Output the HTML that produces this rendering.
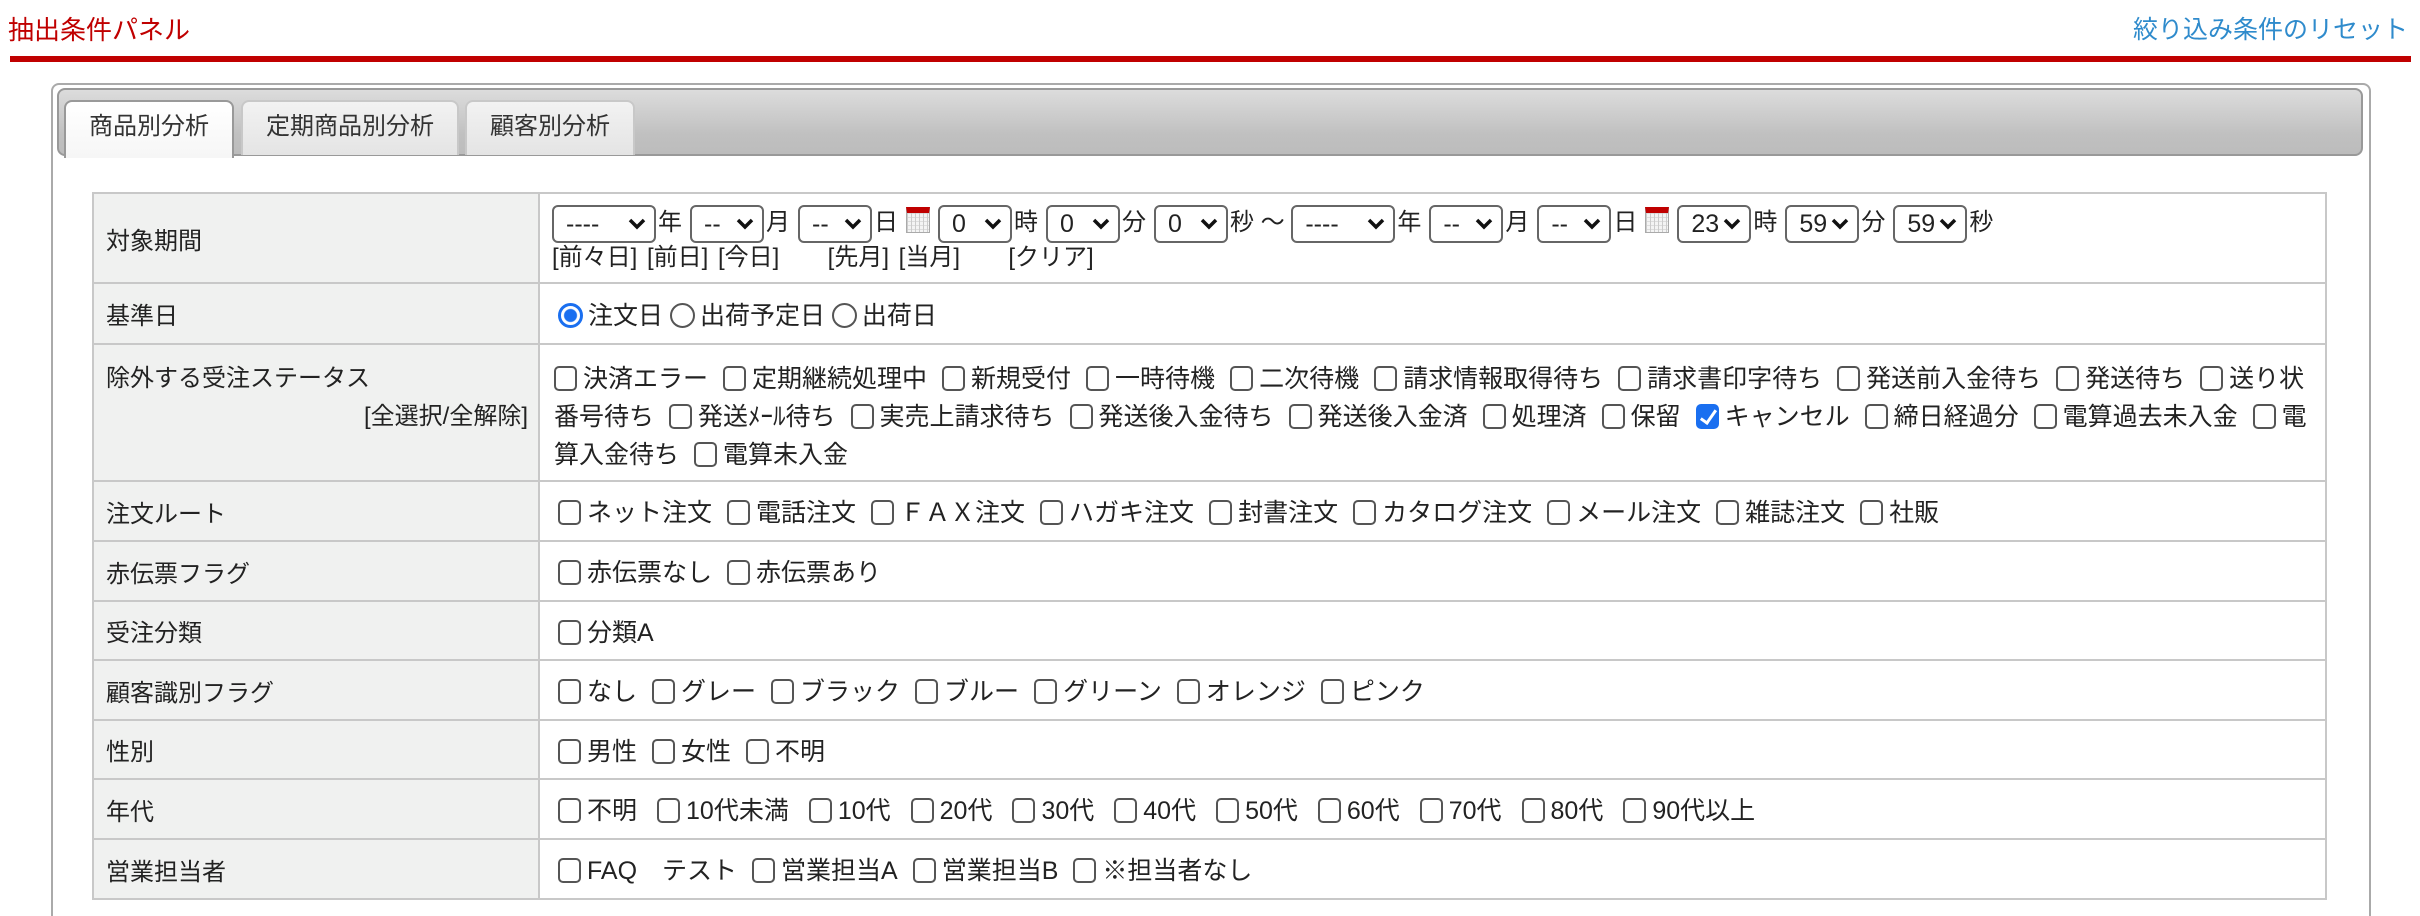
<!DOCTYPE html>
<html><head><meta charset="utf-8">
<style>
*{box-sizing:border-box;margin:0;padding:0}
html,body{width:2420px;height:916px;overflow:hidden}
body{background:#fff;position:relative;font-family:"Liberation Sans","Noto Sans CJK JP",sans-serif;font-size:24px;color:#222}
.title{position:absolute;left:8px;top:13px;font-size:26px;color:#c00000;line-height:34px}
.reset{position:absolute;right:12px;top:13px;font-size:25px;color:#2f8bcc;line-height:34px}
.bar{position:absolute;left:10px;top:56px;width:2401px;height:6px;background:#c00000}
.panel{position:absolute;left:51px;top:83px;width:2320px;height:860px;border:2px solid #aaa;border-radius:8px}
.tabbar{position:absolute;left:57px;top:88px;width:2306px;height:68px;border:2px solid #999;border-radius:8px;background:linear-gradient(#dcdcdc,#c0c0c0 70%,#bcbcbc)}
.tab{position:absolute;top:100px;height:55px;border:2px solid #c8c8c8;border-bottom:none;border-radius:8px 8px 0 0;background:linear-gradient(#f2f2f2,#e4e4e4);color:#333;font-size:24px;line-height:50px;text-align:center}
.tab.act{background:linear-gradient(#fff,#f6f6f6);border-color:#999;height:58px;z-index:2}
table{position:absolute;left:92px;top:192px;width:2235px;border-collapse:collapse}
td{border:2px solid #c8c8c8;vertical-align:middle;white-space:nowrap}
td.l{width:446px;background:#f0f1f0;padding-left:12px;color:#222}
td.c{padding-left:18px;background:#fff;font-size:25px}
.cb{display:inline-block;width:23px;height:25px;border:2px solid #555;border-radius:5px;vertical-align:-4px;margin-right:6px;background:#fff}
.cb.on{background:#1a6ff0;border-color:#1a6ff0;position:relative}
.cb.on:after{content:"";position:absolute;left:6px;top:1px;width:6px;height:14px;border:solid #fff;border-width:0 3px 3px 0;transform:rotate(35deg)}
.it{margin-right:15px}
.wide .it{margin-right:20px}
.rd{display:inline-block;width:25px;height:25px;border:2px solid #555;border-radius:50%;vertical-align:-4px;margin-right:5px;background:#fff}
.rd.on{border:3px solid #1a6ff0;background:radial-gradient(#1a6ff0 0 6px,#fff 7px)}
.sel{display:inline-block;height:38px;border:2px solid #666;border-radius:6px;vertical-align:middle;position:relative;line-height:34px;padding-left:12px;font-size:25px;background:#fff;margin-right:2px}
.sel svg{position:absolute;right:8px;top:11px}
.cal{display:inline-block;width:24px;height:26px;vertical-align:middle;margin:0 8px 0 8px;background:repeating-linear-gradient(90deg,#ccc 0 1px,transparent 1px 4px),repeating-linear-gradient(#ddd 0 1px,#f4f4f4 1px 4px);border:1px solid #aaa;border-top:6px solid #c00000;position:relative;top:-4px}
.g{display:inline-block;width:8px}
.l1{line-height:38px;height:38px}
.l2{line-height:32px;word-spacing:3px}
.ml{line-height:38px}
</style></head><body>
<div class="title">抽出条件パネル</div>
<div class="reset">絞り込み条件のリセット</div>
<div class="bar"></div>
<div class="panel"></div>
<div class="tabbar"></div>
<div class="tab act" style="left:64px;width:170px">商品別分析</div>
<div class="tab" style="left:241px;width:218px">定期商品別分析</div>
<div class="tab" style="left:465px;width:170px">顧客別分析</div>
<table>
<tr style="height:90px"><td class="l">対象期間</td><td class="c" style="padding-left:12px;vertical-align:top;padding-top:10px;font-size:24px">
<div class="l1"><span class="sel" style="width:104px">----<svg width="18" height="12" viewBox="0 0 18 12"><path d="M2 2l7 7 7-7" stroke="#111" stroke-width="3.5" fill="none"/></svg></span>年<span class="g"></span><span class="sel" style="width:74px">--<svg width="18" height="12" viewBox="0 0 18 12"><path d="M2 2l7 7 7-7" stroke="#111" stroke-width="3.5" fill="none"/></svg></span>月<span class="g"></span><span class="sel" style="width:74px">--<svg width="18" height="12" viewBox="0 0 18 12"><path d="M2 2l7 7 7-7" stroke="#111" stroke-width="3.5" fill="none"/></svg></span>日<span class="cal"></span><span class="sel" style="width:74px">0<svg width="18" height="12" viewBox="0 0 18 12"><path d="M2 2l7 7 7-7" stroke="#111" stroke-width="3.5" fill="none"/></svg></span>時<span class="g"></span><span class="sel" style="width:74px">0<svg width="18" height="12" viewBox="0 0 18 12"><path d="M2 2l7 7 7-7" stroke="#111" stroke-width="3.5" fill="none"/></svg></span>分<span class="g"></span><span class="sel" style="width:74px">0<svg width="18" height="12" viewBox="0 0 18 12"><path d="M2 2l7 7 7-7" stroke="#111" stroke-width="3.5" fill="none"/></svg></span>秒 ～ <span class="sel" style="width:104px">----<svg width="18" height="12" viewBox="0 0 18 12"><path d="M2 2l7 7 7-7" stroke="#111" stroke-width="3.5" fill="none"/></svg></span>年<span class="g"></span><span class="sel" style="width:74px">--<svg width="18" height="12" viewBox="0 0 18 12"><path d="M2 2l7 7 7-7" stroke="#111" stroke-width="3.5" fill="none"/></svg></span>月<span class="g"></span><span class="sel" style="width:74px">--<svg width="18" height="12" viewBox="0 0 18 12"><path d="M2 2l7 7 7-7" stroke="#111" stroke-width="3.5" fill="none"/></svg></span>日<span class="cal"></span><span class="sel" style="width:74px">23<svg width="18" height="12" viewBox="0 0 18 12"><path d="M2 2l7 7 7-7" stroke="#111" stroke-width="3.5" fill="none"/></svg></span>時<span class="g"></span><span class="sel" style="width:74px">59<svg width="18" height="12" viewBox="0 0 18 12"><path d="M2 2l7 7 7-7" stroke="#111" stroke-width="3.5" fill="none"/></svg></span>分<span class="g"></span><span class="sel" style="width:74px">59<svg width="18" height="12" viewBox="0 0 18 12"><path d="M2 2l7 7 7-7" stroke="#111" stroke-width="3.5" fill="none"/></svg></span>秒</div>
<div class="l2">[前々日] [前日] [今日] &nbsp;&nbsp;&nbsp; [先月] [当月] &nbsp;&nbsp;&nbsp; [クリア]</div>
</td></tr>
<tr style="height:61px"><td class="l">基準日</td><td class="c"><span class="rd on"></span>注文日 <span class="rd"></span>出荷予定日 <span class="rd"></span>出荷日</td></tr>
<tr style="height:137px"><td class="l ml" style="vertical-align:top;padding-top:15px;padding-right:10px">除外する受注ステータス<div style="text-align:right">[全選択/全解除]</div></td>
<td class="c ml" style="vertical-align:top;padding-top:15px;padding-left:14px">
<span class="cb"></span><span class="it">決済エラー</span><span class="cb"></span><span class="it">定期継続処理中</span><span class="cb"></span><span class="it">新規受付</span><span class="cb"></span><span class="it">一時待機</span><span class="cb"></span><span class="it">二次待機</span><span class="cb"></span><span class="it">請求情報取得待ち</span><span class="cb"></span><span class="it">請求書印字待ち</span><span class="cb"></span><span class="it">発送前入金待ち</span><span class="cb"></span><span class="it">発送待ち</span><span class="cb"></span>送り状<br><span class="it">番号待ち</span><span class="cb"></span><span class="it">発送ﾒｰﾙ待ち</span><span class="cb"></span><span class="it">実売上請求待ち</span><span class="cb"></span><span class="it">発送後入金待ち</span><span class="cb"></span><span class="it">発送後入金済</span><span class="cb"></span><span class="it">処理済</span><span class="cb"></span><span class="it">保留</span><span class="cb on"></span><span class="it">キャンセル</span><span class="cb"></span><span class="it">締日経過分</span><span class="cb"></span><span class="it">電算過去未入金</span><span class="cb"></span>電<br><span class="it">算入金待ち</span><span class="cb"></span>電算未入金
</td></tr>
<tr style="height:60px"><td class="l">注文ルート</td><td class="c"><span class="cb"></span><span class="it">ネット注文</span><span class="cb"></span><span class="it">電話注文</span><span class="cb"></span><span class="it">ＦＡＸ注文</span><span class="cb"></span><span class="it">ハガキ注文</span><span class="cb"></span><span class="it">封書注文</span><span class="cb"></span><span class="it">カタログ注文</span><span class="cb"></span><span class="it">メール注文</span><span class="cb"></span><span class="it">雑誌注文</span><span class="cb"></span>社販</td></tr>
<tr style="height:60px"><td class="l">赤伝票フラグ</td><td class="c"><span class="cb"></span><span class="it">赤伝票なし</span><span class="cb"></span>赤伝票あり</td></tr>
<tr style="height:59px"><td class="l">受注分類</td><td class="c"><span class="cb"></span>分類A</td></tr>
<tr style="height:60px"><td class="l">顧客識別フラグ</td><td class="c"><span class="cb"></span><span class="it">なし</span><span class="cb"></span><span class="it">グレー</span><span class="cb"></span><span class="it">ブラック</span><span class="cb"></span><span class="it">ブルー</span><span class="cb"></span><span class="it">グリーン</span><span class="cb"></span><span class="it">オレンジ</span><span class="cb"></span>ピンク</td></tr>
<tr style="height:59px"><td class="l">性別</td><td class="c"><span class="cb"></span><span class="it">男性</span><span class="cb"></span><span class="it">女性</span><span class="cb"></span>不明</td></tr>
<tr style="height:60px"><td class="l">年代</td><td class="c wide"><span class="cb"></span><span class="it">不明</span><span class="cb"></span><span class="it">10代未満</span><span class="cb"></span><span class="it">10代</span><span class="cb"></span><span class="it">20代</span><span class="cb"></span><span class="it">30代</span><span class="cb"></span><span class="it">40代</span><span class="cb"></span><span class="it">50代</span><span class="cb"></span><span class="it">60代</span><span class="cb"></span><span class="it">70代</span><span class="cb"></span><span class="it">80代</span><span class="cb"></span>90代以上</td></tr>
<tr style="height:60px"><td class="l">営業担当者</td><td class="c"><span class="cb"></span><span class="it">FAQ　テスト</span><span class="cb"></span><span class="it">営業担当A</span><span class="cb"></span><span class="it">営業担当B</span><span class="cb"></span>※担当者なし</td></tr>
</table>
</body></html>
